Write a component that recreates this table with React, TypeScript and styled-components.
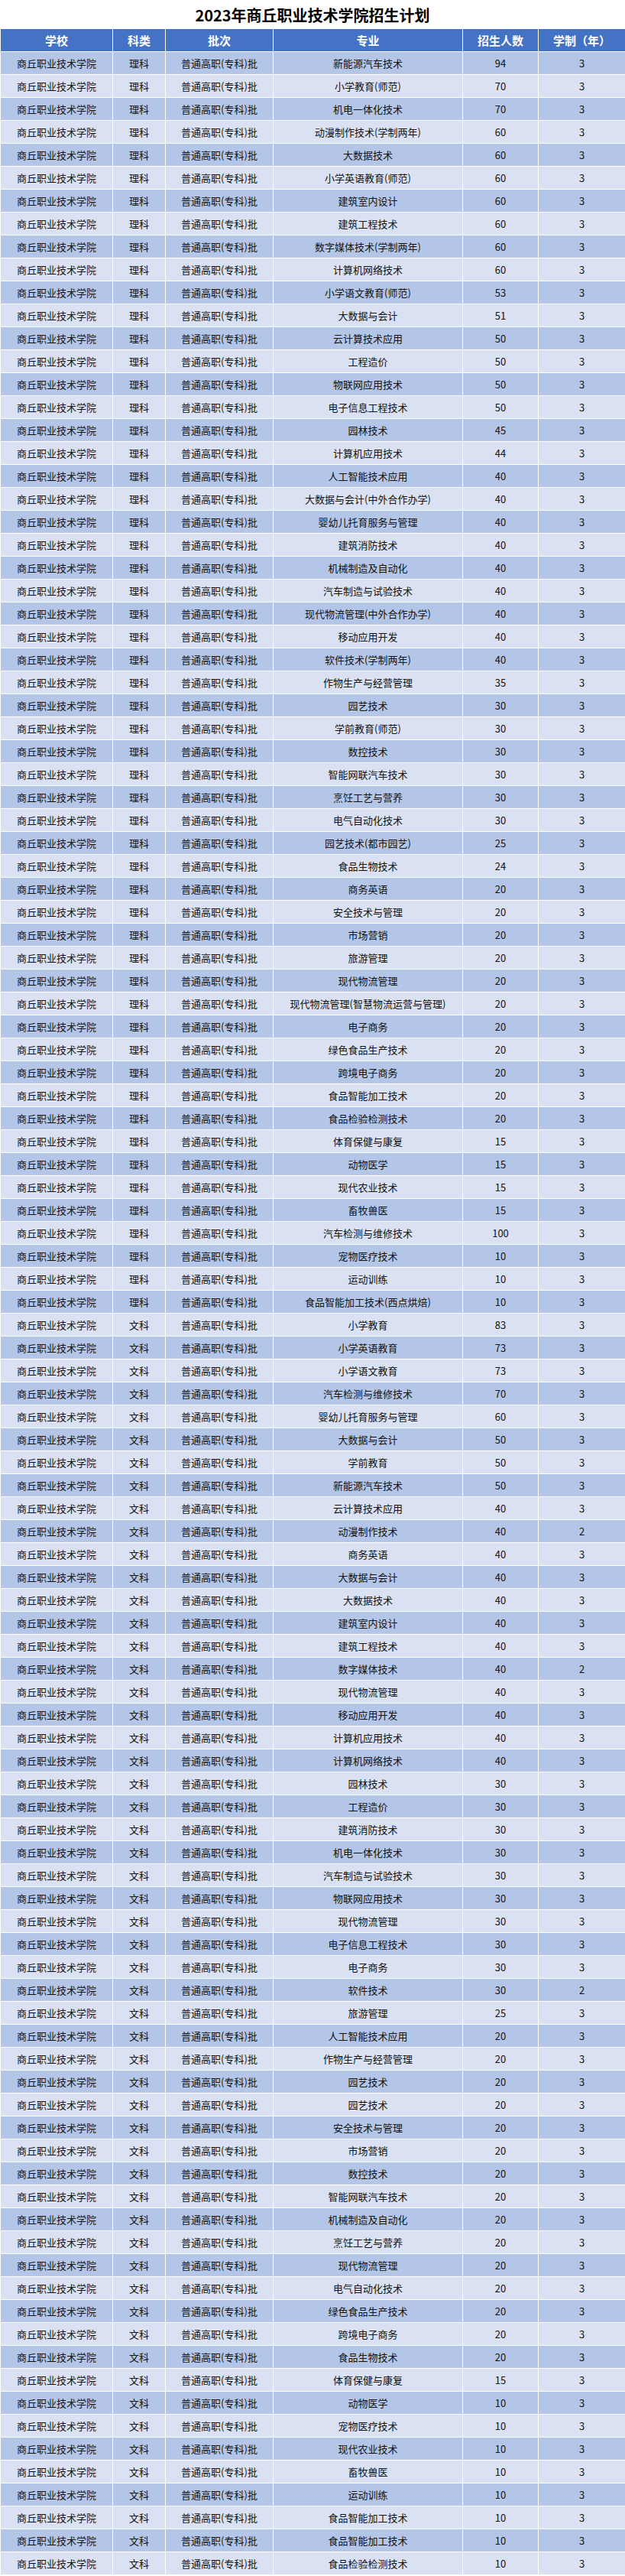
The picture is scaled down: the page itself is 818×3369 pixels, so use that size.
import React from "react";
import styled, { createGlobalStyle } from "styled-components";

const GlobalStyle = createGlobalStyle`
  html, body { margin: 0; padding: 0; background: #ffffff; }
  body { font-family: "Noto Sans CJK SC", "Noto Sans", "Liberation Sans", sans-serif; }
`;

const Page = styled.div`
  width: 818px;
  background: #ffffff;
  padding-bottom: 1px;
`;

const Title = styled.h1`
  margin: 0;
  height: 38px;
  display: flex;
  align-items: center;
  justify-content: center;
  font-size: 20px;
  font-weight: 700;
  color: #000000;
  letter-spacing: 0;
`;

const Table = styled.div`
  display: flex;
  flex-direction: column;
  gap: 1px;
  padding-left: 1px;
  background: #ffffff;
`;

const Cell = styled.div`
  display: flex;
  align-items: center;
  justify-content: center;
  white-space: nowrap;
  overflow: hidden;
`;

const HeaderRow = styled.div`
  display: grid;
  grid-template-columns: 146px 68px 140px 247px 98px 1fr;
  column-gap: 1px;
  height: 29px;
  & > ${Cell} {
    background: #4472c4;
    color: #ffffff;
    font-size: 15px;
    font-weight: 700;
  }
`;

const Row = styled.div<{ $dark: boolean }>`
  display: grid;
  grid-template-columns: 146px 68px 140px 247px 98px 1fr;
  column-gap: 1px;
  height: 29px;
  & > ${Cell} {
    background: ${(p) => (p.$dark ? "#b4c6e7" : "#d9e1f2")};
    color: #111111;
    font-size: 13px;
  }
`;

type Item = [string, string, number, number];

const L = "理科";
const W = "文科";

const rows: Item[] = [
  [L, "新能源汽车技术", 94, 3],
  [L, "小学教育(师范)", 70, 3],
  [L, "机电一体化技术", 70, 3],
  [L, "动漫制作技术(学制两年)", 60, 3],
  [L, "大数据技术", 60, 3],
  [L, "小学英语教育(师范)", 60, 3],
  [L, "建筑室内设计", 60, 3],
  [L, "建筑工程技术", 60, 3],
  [L, "数字媒体技术(学制两年)", 60, 3],
  [L, "计算机网络技术", 60, 3],
  [L, "小学语文教育(师范)", 53, 3],
  [L, "大数据与会计", 51, 3],
  [L, "云计算技术应用", 50, 3],
  [L, "工程造价", 50, 3],
  [L, "物联网应用技术", 50, 3],
  [L, "电子信息工程技术", 50, 3],
  [L, "园林技术", 45, 3],
  [L, "计算机应用技术", 44, 3],
  [L, "人工智能技术应用", 40, 3],
  [L, "大数据与会计(中外合作办学)", 40, 3],
  [L, "婴幼儿托育服务与管理", 40, 3],
  [L, "建筑消防技术", 40, 3],
  [L, "机械制造及自动化", 40, 3],
  [L, "汽车制造与试验技术", 40, 3],
  [L, "现代物流管理(中外合作办学)", 40, 3],
  [L, "移动应用开发", 40, 3],
  [L, "软件技术(学制两年)", 40, 3],
  [L, "作物生产与经营管理", 35, 3],
  [L, "园艺技术", 30, 3],
  [L, "学前教育(师范)", 30, 3],
  [L, "数控技术", 30, 3],
  [L, "智能网联汽车技术", 30, 3],
  [L, "烹饪工艺与营养", 30, 3],
  [L, "电气自动化技术", 30, 3],
  [L, "园艺技术(都市园艺)", 25, 3],
  [L, "食品生物技术", 24, 3],
  [L, "商务英语", 20, 3],
  [L, "安全技术与管理", 20, 3],
  [L, "市场营销", 20, 3],
  [L, "旅游管理", 20, 3],
  [L, "现代物流管理", 20, 3],
  [L, "现代物流管理(智慧物流运营与管理)", 20, 3],
  [L, "电子商务", 20, 3],
  [L, "绿色食品生产技术", 20, 3],
  [L, "跨境电子商务", 20, 3],
  [L, "食品智能加工技术", 20, 3],
  [L, "食品检验检测技术", 20, 3],
  [L, "体育保健与康复", 15, 3],
  [L, "动物医学", 15, 3],
  [L, "现代农业技术", 15, 3],
  [L, "畜牧兽医", 15, 3],
  [L, "汽车检测与维修技术", 100, 3],
  [L, "宠物医疗技术", 10, 3],
  [L, "运动训练", 10, 3],
  [L, "食品智能加工技术(西点烘焙)", 10, 3],
  [W, "小学教育", 83, 3],
  [W, "小学英语教育", 73, 3],
  [W, "小学语文教育", 73, 3],
  [W, "汽车检测与维修技术", 70, 3],
  [W, "婴幼儿托育服务与管理", 60, 3],
  [W, "大数据与会计", 50, 3],
  [W, "学前教育", 50, 3],
  [W, "新能源汽车技术", 50, 3],
  [W, "云计算技术应用", 40, 3],
  [W, "动漫制作技术", 40, 2],
  [W, "商务英语", 40, 3],
  [W, "大数据与会计", 40, 3],
  [W, "大数据技术", 40, 3],
  [W, "建筑室内设计", 40, 3],
  [W, "建筑工程技术", 40, 3],
  [W, "数字媒体技术", 40, 2],
  [W, "现代物流管理", 40, 3],
  [W, "移动应用开发", 40, 3],
  [W, "计算机应用技术", 40, 3],
  [W, "计算机网络技术", 40, 3],
  [W, "园林技术", 30, 3],
  [W, "工程造价", 30, 3],
  [W, "建筑消防技术", 30, 3],
  [W, "机电一体化技术", 30, 3],
  [W, "汽车制造与试验技术", 30, 3],
  [W, "物联网应用技术", 30, 3],
  [W, "现代物流管理", 30, 3],
  [W, "电子信息工程技术", 30, 3],
  [W, "电子商务", 30, 3],
  [W, "软件技术", 30, 2],
  [W, "旅游管理", 25, 3],
  [W, "人工智能技术应用", 20, 3],
  [W, "作物生产与经营管理", 20, 3],
  [W, "园艺技术", 20, 3],
  [W, "园艺技术", 20, 3],
  [W, "安全技术与管理", 20, 3],
  [W, "市场营销", 20, 3],
  [W, "数控技术", 20, 3],
  [W, "智能网联汽车技术", 20, 3],
  [W, "机械制造及自动化", 20, 3],
  [W, "烹饪工艺与营养", 20, 3],
  [W, "现代物流管理", 20, 3],
  [W, "电气自动化技术", 20, 3],
  [W, "绿色食品生产技术", 20, 3],
  [W, "跨境电子商务", 20, 3],
  [W, "食品生物技术", 20, 3],
  [W, "体育保健与康复", 15, 3],
  [W, "动物医学", 10, 3],
  [W, "宠物医疗技术", 10, 3],
  [W, "现代农业技术", 10, 3],
  [W, "畜牧兽医", 10, 3],
  [W, "运动训练", 10, 3],
  [W, "食品智能加工技术", 10, 3],
  [W, "食品智能加工技术", 10, 3],
  [W, "食品检验检测技术", 10, 3],
];

const headers = ["学校", "科类", "批次", "专业", "招生人数", "学制（年）"];

export default function App() {
  return (
    <Page>
      <GlobalStyle />
      <Title>2023年商丘职业技术学院招生计划</Title>
      <Table>
        <HeaderRow>
          {headers.map((h) => (
            <Cell key={h}>{h}</Cell>
          ))}
        </HeaderRow>
        {rows.map(([cat, major, count, years], i) => (
          <Row key={i} $dark={i % 2 === 0}>
            <Cell>商丘职业技术学院</Cell>
            <Cell>{cat}</Cell>
            <Cell>普通高职(专科)批</Cell>
            <Cell>{major}</Cell>
            <Cell>{count}</Cell>
            <Cell>{years}</Cell>
          </Row>
        ))}
      </Table>
    </Page>
  );
}
